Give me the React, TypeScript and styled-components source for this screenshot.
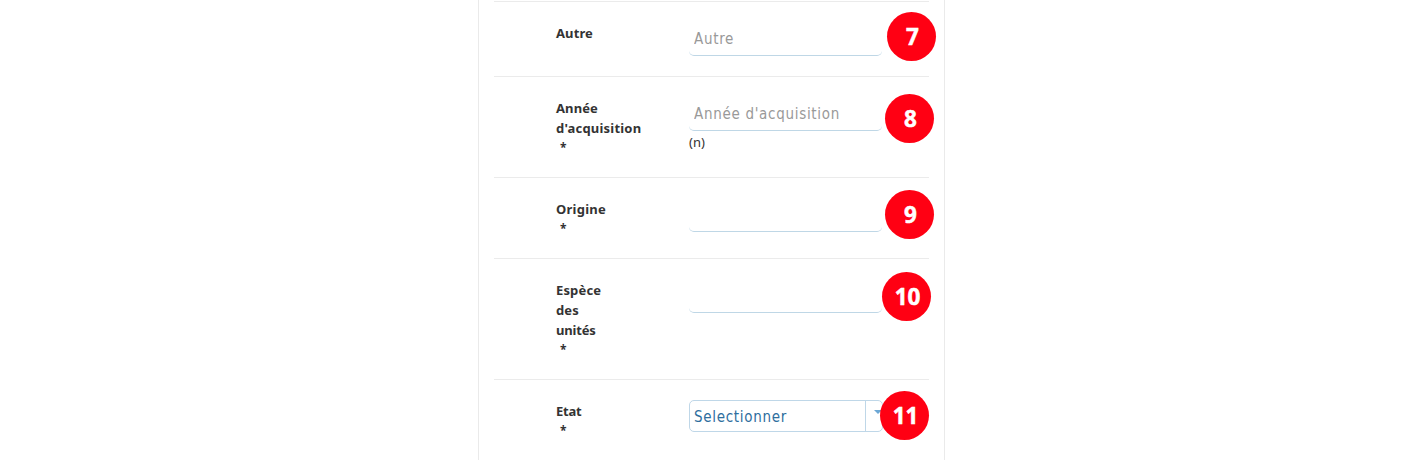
import React from 'react';
import styled, { createGlobalStyle } from 'styled-components';

const GlobalStyle = createGlobalStyle`
  * { box-sizing: border-box; }
  body {
    margin: 0;
    background: #fff;
    overflow: hidden;
    font-family: "Noto Sans", "Open Sans", sans-serif;
    color: #333;
  }
`;

const Page = styled.main`
  height: 460px;
  display: flex;
  padding-left: 478px;
  overflow: hidden;
`;

const Panel = styled.section`
  width: 467px;
  height: 460px;
  padding: 1px 15px 0;
  border: solid #eaeaea;
  border-width: 0 1px;
`;

const Row = styled.div<{ $height: number }>`
  position: relative;
  display: flex;
  height: ${(p) => p.$height}px;
  padding: 20px 0 0 62px;
  border-top: 1px solid #ebebeb;
`;

const Label = styled.label`
  width: 133px;
  padding-top: 1px;
  font: bold 13px/20px "Noto Sans", "Open Sans", sans-serif;
`;

const LabelLine = styled.span<{ $spacing: number }>`
  display: block;
  white-space: nowrap;
  letter-spacing: ${(p) => p.$spacing}px;
`;

const Required = styled.span`
  display: block;
  padding-left: 4px;
  font-size: 12px;
  line-height: 20px;
`;

const Field = styled.div`
  width: 194px;
`;

const Input = styled.input`
  display: block;
  width: 193px;
  height: 34px;
  padding: 1px 0 0 5px;
  border: solid #bfd7e6;
  border-width: 0 0 1px;
  border-radius: 5px;
  outline: 0;
  background: transparent;
  font: condensed 15px "DejaVu Sans Condensed", "DejaVu Sans", sans-serif;
  letter-spacing: 0.7px;
  &::placeholder { color: #999; opacity: 1; }
`;

const Hint = styled.div`
  font-size: 13px;
  line-height: 20px;
  padding-top: 1px;
`;

const Select = styled.div`
  display: flex;
  width: 194px;
  height: 32px;
  border: 1px solid #bfd7e8;
  border-radius: 5px;
  color: #2e6e9e;
  font: condensed 15px/32px "DejaVu Sans Condensed", "DejaVu Sans", sans-serif;
  letter-spacing: 0.7px;
`;

const SelectText = styled.span`
  width: 176px;
  height: 30px;
  padding-left: 4px;
  border-right: 1px solid #bfd7e8;
`;

const Arrow = styled.span`
  margin: 9px 0 0 8px;
  width: 8px;
  height: 4px;
  background: #6da8d5;
  clip-path: polygon(0 0, 100% 0, 50% 100%);
`;

const Badge = styled.span<{ $left: number; $top: number }>`
  position: absolute;
  left: ${(p) => p.$left}px;
  top: ${(p) => p.$top}px;
  width: 49px;
  height: 49px;
  padding-left: 2px;
  border-radius: 50%;
  background: #ff0013;
  color: #fff;
  font: bold 22.5px/49px "Open Sans", "Noto Sans", sans-serif;
  -webkit-text-stroke: 0.5px #fff;
  text-align: center;
`;

type FieldRow = {
  label: { text: string; spacing: number }[];
  height: number;
  required?: boolean;
  placeholder?: string;
  hint?: string;
  select?: string;
  badge: { n: number; left: number; top: number };
};

const rows: FieldRow[] = [
  {
    label: [{ text: 'Autre', spacing: 0.1 }], height: 75,
    placeholder: 'Autre', badge: { n: 7, left: 393, top: 10 },
  },
  {
    label: [{ text: 'Année', spacing: 0.1 }, { text: "d'acquisition", spacing: 0.2 }],
    height: 101, required: true,
    placeholder: "Année d'acquisition", hint: '(n)', badge: { n: 8, left: 391, top: 17 },
  },
  {
    label: [{ text: 'Origine', spacing: 0.25 }], height: 81, required: true,
    badge: { n: 9, left: 391, top: 12 },
  },
  {
    label: [{ text: 'Espèce', spacing: 0.15 }, { text: 'des', spacing: 0.15 }, { text: 'unités', spacing: -0.2 }],
    height: 121, required: true, badge: { n: 10, left: 388, top: 13 },
  },
  {
    label: [{ text: 'Etat', spacing: -0.2 }], height: 81, required: true,
    select: 'Selectionner', badge: { n: 11, left: 386, top: 11 },
  },
];

export default function App() {
  return (
    <>
      <GlobalStyle />
      <Page>
        <Panel>
          {rows.map((row) => (
            <Row key={row.badge.n} $height={row.height}>
              <Label>
                {row.label.map((line) => (
                  <LabelLine key={line.text} $spacing={line.spacing}>{line.text}</LabelLine>
                ))}
                {row.required && <Required>*</Required>}
              </Label>
              <Field>
                {row.select
                  ? <Select><SelectText>{row.select}</SelectText><Arrow /></Select>
                  : <Input placeholder={row.placeholder} />}
                {row.hint && <Hint>{row.hint}</Hint>}
              </Field>
              <Badge $left={row.badge.left} $top={row.badge.top}>{row.badge.n}</Badge>
            </Row>
          ))}
        </Panel>
      </Page>
    </>
  );
}
